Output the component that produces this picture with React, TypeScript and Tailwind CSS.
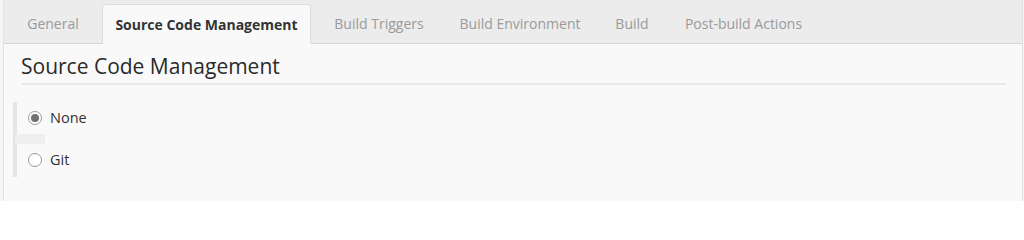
const tabs = [
  { label: 'General', w: 'w-[76px]' },
  { label: 'Source Code Management', w: 'w-[209px]', active: true },
  { label: 'Build Triggers', w: 'w-[114px]' },
  { label: 'Build Environment', w: 'w-[146px]' },
  { label: 'Build', w: 'w-[56px]' },
  { label: 'Post-build Actions', w: 'w-[145px]' },
];

function Radio({ checked, label }: { checked?: boolean; label: string }) {
  return (
    <label className="flex items-center gap-[8px] h-[20px] text-[14.5px] text-[#333]">
      <span className="w-[14px] h-[14px] rounded-full border border-[#999] bg-white flex items-center justify-center">
        {checked && <span className="w-[8px] h-[8px] rounded-full bg-[#707070]" />}
      </span>
      {label}
    </label>
  );
}

export default function App() {
  return (
    <div
      className="w-[1024px] h-[201px] bg-[#f5f5f5] pl-[3px] pr-[1px]"
      style={{ fontFamily: '"Open Sans", "Noto Sans", sans-serif' }}
    >
      <div className="h-full border-x border-[#e2e2e2] bg-[#f9f9f9] flex flex-col">
        {/* Tab bar */}
        <div className="h-[44px] bg-[#ececec] border-b border-[#d6d6d6] flex items-end pl-[11px] gap-[11px]">
          {tabs.map((t) => (
            <div
              key={t.label}
              className={`${t.w} flex items-center justify-center text-[14px] whitespace-nowrap ${
                t.active
                  ? 'bg-[#f9f9f9] border border-b-0 border-[#dcdcdc] rounded-t-[4px] font-bold text-[#333] -mb-[1px] h-[40px]'
                  : 'text-[#9a9a9a] h-[39px]'
              }`}
            >
              {t.label}
            </div>
          ))}
        </div>

        {/* Section */}
        <div className="pl-[17px] pr-[16px] pt-[9px]">
          <h2 className="text-[21px] leading-[26px] font-medium text-[#2a2a2a] pb-[4px] border-b-2 border-[#e9e9e9]">
            Source Code Management
          </h2>
        </div>

        <div className="ml-[9px] mt-[17px] w-[4px] h-[75px] bg-[#e4e4e4] relative">
          <div className="absolute left-[2px] top-[32px] w-[30px] h-[10px] bg-[#efefef]" />
          <div className="absolute left-[15px] top-[6px]">
            <Radio checked label="None" />
          </div>
          <div className="absolute left-[15px] top-[48px]">
            <Radio label="Git" />
          </div>
        </div>
      </div>
    </div>
  );
}
